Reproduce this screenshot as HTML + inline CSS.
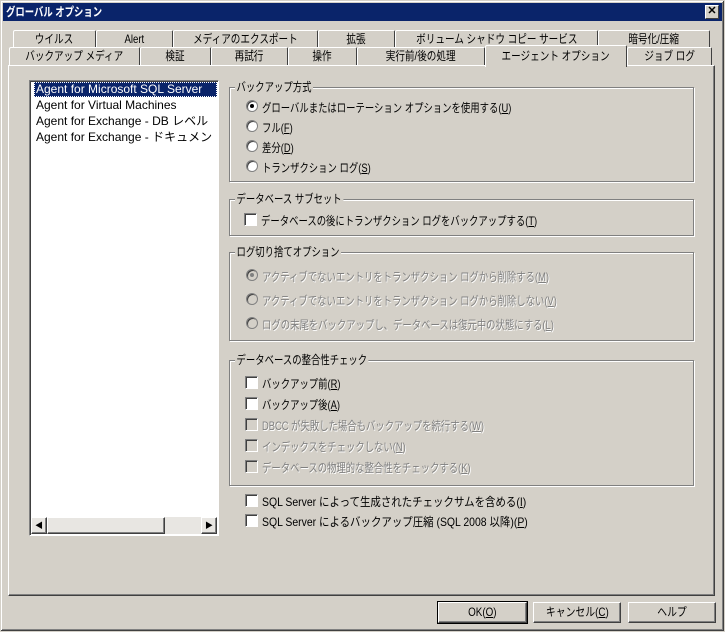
<!DOCTYPE html>
<html><head><meta charset="utf-8"><style>
*{box-sizing:border-box;margin:0;padding:0}
body{width:725px;height:632px;background:#d4d0c8;position:relative;overflow:hidden;font-family:"Liberation Sans","Noto Sans CJK JP",sans-serif;font-size:12px;color:#000}
.a{position:absolute;white-space:nowrap}
.s{transform:scaleX(.78);transform-origin:left center}
.m{transform:scaleX(.87);transform-origin:left center}
.tab span{display:inline-block;transform:scaleX(.8)}
.win{left:0;top:0;width:725px;height:632px;border:1px solid #d4d0c8;box-shadow:inset -1px -1px #404040,inset 1px 1px #fff,inset -2px -2px #808080}
.title{left:3px;top:3px;width:719px;height:18px;background:#0a246a}
.close{left:705px;top:5px;width:14px;height:14px;background:#d4d0c8;border:1px solid;border-color:#fff #404040 #404040 #fff;font-size:11px;line-height:11px;text-align:center;color:#000;font-weight:bold}
.tab{height:18px;border:1px solid;border-color:#fff #404040 transparent #fff;border-bottom:none;text-align:center;line-height:17px;background:#d4d0c8;border-radius:2px 2px 0 0}
.panel{left:8px;top:65px;width:707px;height:531px;border:1px solid;border-color:#fff #404040 #404040 #fff;box-shadow:inset -1px -1px #808080}
.grp{border:1px solid #808080;box-shadow:1px 1px #fff,inset 1px 1px #fff}
.leg{background:#d4d0c8;padding:0 2px;line-height:13px}
.rb{width:12px;height:12px;border-radius:50%;background:#fff;border:1px solid #808080;box-shadow:inset 1px 1px #404040}
.rb.dis{background:#d4d0c8}
.dot{left:3px;top:3px;width:4px;height:4px;border-radius:50%;background:#000;position:absolute}
.cb{width:13px;height:13px;background:#fff;border:1px solid;border-color:#808080 #fff #fff #808080;box-shadow:inset 1px 1px #404040}
.cb.dis{background:#d4d0c8}
.dis-t{color:#808080;text-shadow:1px 1px #fff}
.btn{height:21px;border:1px solid;border-color:#fff #404040 #404040 #fff;box-shadow:inset -1px -1px #808080;text-align:center;line-height:19px}
.btn span{display:inline-block;transform:scaleX(.82)}
u{text-decoration:underline}
</style></head><body>
<div class="a win"></div>
<div class="a title"></div>
<div class="a s" style="left:6px;top:3px;line-height:18px;color:#fff;font-weight:bold">グローバル オプション</div>
<div class="a close">✕</div>

<div class="a panel"></div>
<div class="a tab" style="left:13px;top:30px;width:83px"><span>ウイルス</span></div>
<div class="a tab" style="left:96px;top:30px;width:77px"><span>Alert</span></div>
<div class="a tab" style="left:173px;top:30px;width:145px"><span>メディアのエクスポート</span></div>
<div class="a tab" style="left:318px;top:30px;width:77px"><span>拡張</span></div>
<div class="a tab" style="left:395px;top:30px;width:203px"><span>ボリューム シャドウ コピー サービス</span></div>
<div class="a tab" style="left:598px;top:30px;width:112px"><span>暗号化/圧縮</span></div>
<div class="a tab" style="left:9px;top:47px;width:131px"><span>バックアップ メディア</span></div>
<div class="a tab" style="left:140px;top:47px;width:71px"><span>検証</span></div>
<div class="a tab" style="left:211px;top:47px;width:77px"><span>再試行</span></div>
<div class="a tab" style="left:288px;top:47px;width:69px"><span>操作</span></div>
<div class="a tab" style="left:357px;top:47px;width:128px"><span>実行前/後の処理</span></div>
<div class="a tab" style="left:485px;top:45px;width:142px;height:22px;border-bottom:none;z-index:2;line-height:20px"><span>エージェント オプション</span></div>
<div class="a tab" style="left:627px;top:47px;width:85px"><span>ジョブ ログ</span></div>

<div class="a" style="left:29px;top:80px;width:190px;height:456px;background:#fff;border:1px solid;border-color:#808080 #fff #fff #808080;box-shadow:inset 1px 1px #404040"></div>
<div class="a" style="left:34px;top:82px;width:183px;height:15px;background:#0a246a;outline:1px dotted #fff;outline-offset:-1px"></div>
<div class="a" style="left:36px;top:82px;color:#fff;line-height:15px">Agent for Microsoft SQL Server</div>
<div class="a" style="left:36px;top:98px;line-height:15px">Agent for Virtual Machines</div>
<div class="a" style="left:36px;top:114px;line-height:15px">Agent for Exchange - DB レベル</div>
<div class="a" style="left:36px;top:130px;line-height:15px;width:180px;overflow:hidden">Agent for Exchange - ドキュメント レベル</div>
<div class="a" style="left:31px;top:517px;width:186px;height:17px;background:#e8e6e2"></div>
<div class="a btn" style="left:31px;top:517px;width:16px;height:17px;font-size:8px;line-height:15px">◀</div>
<div class="a btn" style="left:47px;top:517px;width:118px;height:17px"></div>
<div class="a btn" style="left:201px;top:517px;width:16px;height:17px;font-size:8px;line-height:15px">▶</div>

<div class="a grp" style="left:229px;top:87px;width:465px;height:95px"></div>
<div class="a leg s" style="left:235px;top:81px">バックアップ方式</div>
<div class="a rb" style="left:246px;top:100px"><div class="dot"></div></div>
<div class="a s" style="left:262px;top:99px">グローバルまたはローテーション オプションを使用する(<u>U</u>)</div>
<div class="a rb" style="left:246px;top:120px"></div>
<div class="a s" style="left:262px;top:119px">フル(<u>F</u>)</div>
<div class="a rb" style="left:246px;top:140px"></div>
<div class="a s" style="left:262px;top:139px">差分(<u>D</u>)</div>
<div class="a rb" style="left:246px;top:160px"></div>
<div class="a s" style="left:262px;top:159px">トランザクション ログ(<u>S</u>)</div>

<div class="a grp" style="left:229px;top:199px;width:465px;height:37px"></div>
<div class="a leg s" style="left:235px;top:193px">データベース サブセット</div>
<div class="a cb" style="left:244px;top:213px"></div>
<div class="a s" style="left:261px;top:212px">データベースの後にトランザクション ログをバックアップする(<u>T</u>)</div>

<div class="a grp" style="left:229px;top:252px;width:465px;height:89px"></div>
<div class="a leg s" style="left:235px;top:246px">ログ切り捨てオプション</div>
<div class="a rb dis" style="left:246px;top:269px"><div class="dot" style="background:#808080"></div></div>
<div class="a dis-t s" style="left:262px;top:268px">アクティブでないエントリをトランザクション ログから削除する(<u>M</u>)</div>
<div class="a rb dis" style="left:246px;top:293px"></div>
<div class="a dis-t s" style="left:262px;top:292px">アクティブでないエントリをトランザクション ログから削除しない(<u>V</u>)</div>
<div class="a rb dis" style="left:246px;top:317px"></div>
<div class="a dis-t s" style="left:262px;top:316px">ログの末尾をバックアップし、データベースは復元中の状態にする(<u>L</u>)</div>

<div class="a grp" style="left:229px;top:360px;width:465px;height:126px"></div>
<div class="a leg s" style="left:235px;top:354px">データベースの整合性チェック</div>
<div class="a cb" style="left:245px;top:376px"></div>
<div class="a s" style="left:262px;top:375px">バックアップ前(<u>R</u>)</div>
<div class="a cb" style="left:245px;top:397px"></div>
<div class="a s" style="left:262px;top:396px">バックアップ後(<u>A</u>)</div>
<div class="a cb dis" style="left:245px;top:418px"></div>
<div class="a dis-t s" style="left:262px;top:417px">DBCC が失敗した場合もバックアップを続行する(<u>W</u>)</div>
<div class="a cb dis" style="left:245px;top:439px"></div>
<div class="a dis-t s" style="left:262px;top:438px">インデックスをチェックしない(<u>N</u>)</div>
<div class="a cb dis" style="left:245px;top:460px"></div>
<div class="a dis-t s" style="left:262px;top:459px">データベースの物理的な整合性をチェックする(<u>K</u>)</div>

<div class="a cb" style="left:245px;top:494px"></div>
<div class="a m" style="left:262px;top:493px">SQL Server によって生成されたチェックサムを含める(<u>I</u>)</div>
<div class="a cb" style="left:245px;top:514px"></div>
<div class="a m" style="left:262px;top:513px">SQL Server によるバックアップ圧縮 (SQL 2008 以降)(<u>P</u>)</div>

<div class="a btn" style="left:438px;top:602px;width:89px;outline:1px solid #000"><span>OK(<u>O</u>)</span></div>
<div class="a btn" style="left:533px;top:602px;width:88px"><span>キャンセル(<u>C</u>)</span></div>
<div class="a btn" style="left:628px;top:602px;width:88px"><span>ヘルプ</span></div>
</body></html>
